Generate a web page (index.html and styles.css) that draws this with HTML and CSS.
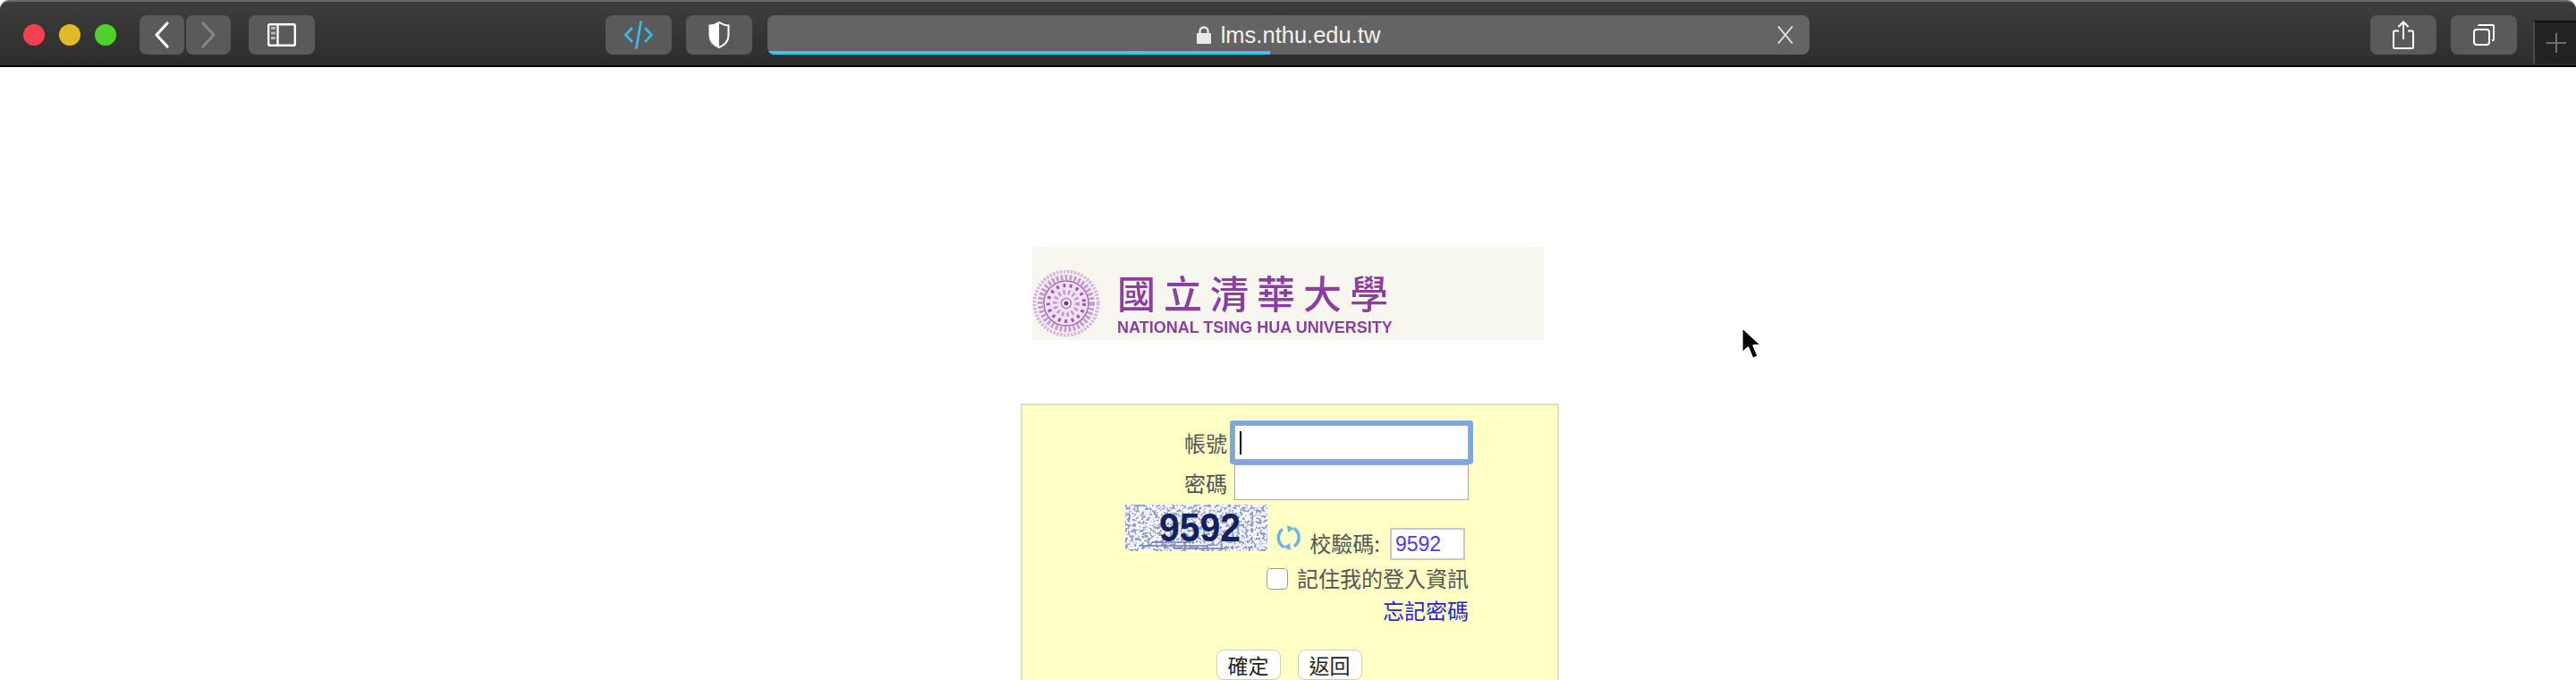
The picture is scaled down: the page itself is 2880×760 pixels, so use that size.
FILE: index.html
```html
<!DOCTYPE html>
<html lang="zh-Hant">
<head>
  <meta charset="UTF-8" />
  <title>lms.nthu.edu.tw</title>
  <link rel="stylesheet" href="styles.css">
</head>
<body>
  <header class="toolbar">
    <div class="lights">
      <span class="light red"></span>
      <span class="light yellow"></span>
      <span class="light green"></span>
    </div>
    <div class="nav">
      <button class="tool tool-nav" type="button">
        <svg width="24" height="32" viewBox="0 0 24 32"><path d="M18 3 L6 16 L18 29" fill="none" stroke="#fff" stroke-width="3.2" stroke-linecap="round" stroke-linejoin="round"/></svg>
      </button>
      <button class="tool tool-nav" type="button">
        <svg width="24" height="32" viewBox="0 0 24 32"><path d="M6 3 L18 16 L6 29" fill="none" stroke="#858585" stroke-width="3.2" stroke-linecap="round" stroke-linejoin="round"/></svg>
      </button>
    </div>
    <button class="tool tool-wide sidebar-btn" type="button">
      <svg width="32" height="26" viewBox="0 0 32 26">
        <rect x="1.2" y="1.2" width="29.6" height="23.6" rx="1.5" fill="none" stroke="#fff" stroke-width="2.4"/>
        <path d="M11.5 1 V25" stroke="#fff" stroke-width="2.4"/>
        <path d="M4 5.5 H9 M4 11 H9 M4 16.5 H9" stroke="#b8b8b8" stroke-width="3"/>
      </svg>
    </button>
    <button class="tool tool-wide code-btn" type="button">
      <svg width="34" height="32" viewBox="0 0 34 32">
        <path d="M10 8 L2.5 16 L10 24 M24 8 L31.5 16 L24 24" fill="none" stroke="#3fb6e8" stroke-width="2.8"/>
        <path d="M19.5 1.5 L14.5 30.5" stroke="#3fb6e8" stroke-width="2.8" stroke-linecap="round"/>
      </svg>
    </button>
    <button class="tool tool-wide shield-btn" type="button">
      <svg width="24" height="30" viewBox="0 0 24 30">
        <path d="M12 1 C8 3.5 5 4.5 1.5 4.5 V15 C1.5 22 6 26.5 12 29 C18 26.5 22.5 22 22.5 15 V4.5 C19 4.5 16 3.5 12 1 Z" fill="none" stroke="#fff" stroke-width="2"/>
        <path d="M12 1 C8 3.5 5 4.5 1.5 4.5 V15 C1.5 22 6 26.5 12 29 Z" fill="#fff"/>
      </svg>
    </button>
    <div class="address">
      <div class="address-text">
        <svg class="lock" width="16" height="20" viewBox="0 0 16 20">
          <path d="M3.5 9 V6 C3.5 3.2 5.5 1.5 8 1.5 C10.5 1.5 12.5 3.2 12.5 6 V9" fill="none" stroke="#e8e8e8" stroke-width="2.4"/>
          <rect x="0" y="8" width="16" height="12" rx="1" fill="#e8e8e8"/>
        </svg>
        <span>lms.nthu.edu.tw</span>
      </div>
      <svg class="stop" width="18" height="20" viewBox="0 0 18 20"><path d="M1 0.5 L17 19.5 M17 0.5 L1 19.5" stroke="#e6e6e6" stroke-width="1.8"/></svg>
      <div class="progress"></div>
    </div>
    <button class="tool tool-wide share-btn" type="button">
      <svg width="24" height="32" viewBox="0 0 24 32">
        <path d="M7 11.5 H2.5 C1.5 11.5 1 12 1 13 V29.5 C1 30.5 1.5 31 2.5 31 H21.5 C22.5 31 23 30.5 23 29.5 V13 C23 12 22.5 11.5 21.5 11.5 H17" fill="none" stroke="#fff" stroke-width="2"/>
        <path d="M12 2 V21 M6.5 7 L12 1.5 L17.5 7" fill="none" stroke="#fff" stroke-width="2"/>
      </svg>
    </button>
    <button class="tool tool-wide tabs-btn" type="button">
      <svg width="24" height="24" viewBox="0 0 24 24">
        <rect x="1" y="6" width="17" height="17" rx="3" fill="none" stroke="#fff" stroke-width="2"/>
        <path d="M6 2 C6 1.3 6.5 1 7 1 H22 C22.6 1 23 1.4 23 2 V17 C23 17.5 22.6 18 22 18 H21" fill="none" stroke="#fff" stroke-width="2"/>
      </svg>
    </button>
    <div class="newtab">
      <svg width="22" height="22" viewBox="0 0 22 22"><path d="M11 0 V22 M0 11 H22" stroke="#6e6e6e" stroke-width="2"/></svg>
    </div>
  </header>

  <main class="page">
    <div class="logo">
      <svg class="seal" width="76" height="76" viewBox="0 0 76 76">
        <circle cx="38" cy="38" r="35.5" fill="none" stroke="#d8b4de" stroke-width="4" stroke-dasharray="2.5 1.5"/>
        <circle cx="38" cy="38" r="29" fill="none" stroke="#c89ad2" stroke-width="6" stroke-dasharray="3 2"/>
        <circle cx="38" cy="38" r="25" fill="#f0e2f0" stroke="#a566b6" stroke-width="1.5"/>
        <circle cx="38" cy="38" r="20" fill="none" stroke="#9d58b0" stroke-width="4" stroke-dasharray="3 4.5"/>
        <circle cx="38" cy="38" r="12.5" fill="none" stroke="#c598d0" stroke-width="5" stroke-dasharray="2.5 3"/>
        <circle cx="38" cy="38" r="5.5" fill="#fff" stroke="#b27cc2" stroke-width="1.5"/>
        <circle cx="38" cy="38" r="2.5" fill="#7e2f95"/>
      </svg>
      <div class="logo-text">
        <div class="logo-zh">國立清華大學</div>
        <div class="logo-en">NATIONAL TSING HUA UNIVERSITY</div>
      </div>
    </div>

    <form class="login">
      <div class="row">
        <label class="lbl">帳號</label>
        <div class="field focused"><span class="caret"></span></div>
      </div>
      <div class="row row-pass">
        <label class="lbl">密碼</label>
        <div class="field"></div>
      </div>
      <div class="row row-captcha">
        <svg class="captcha" width="159" height="52" viewBox="0 0 159 52">
          <defs>
            <filter id="noise" x="0" y="0" width="100%" height="100%">
              <feTurbulence type="fractalNoise" baseFrequency="0.32" numOctaves="2" seed="11"/>
              <feColorMatrix type="matrix" values="0 0 0 0 0.3  0 0 0 0 0.34  0 0 0 0 0.6  7 7 0 0 -6.9"/>
            </filter>
          </defs>
          <rect width="159" height="52" fill="#f6f8ff"/>
          <rect width="159" height="52" filter="url(#noise)"/>
          <path d="M18 46 H92 M30 42 H72 M55 49 H112" stroke="#6d7db4" stroke-width="1.5"/>
          <text class="captcha-text" x="38" y="41" textLength="91" lengthAdjust="spacingAndGlyphs">9592</text>
        </svg>
        <svg class="refresh" width="30" height="30" viewBox="0 0 30 30">
          <path d="M8 5.5 A12 12 0 0 0 9.5 25.5" fill="none" stroke="#6db3e4" stroke-width="3.5"/>
          <path d="M21 24.5 A12 12 0 0 0 20.5 4.5" fill="none" stroke="#6db3e4" stroke-width="3.5"/>
          <path d="M13 1 L21 4.5 L14 9 Z M17 29 L9 25.5 L16 21 Z" fill="#6db3e4"/>
        </svg>
        <label class="lbl lbl-code">校驗碼:</label>
        <div class="code-field">9592</div>
      </div>
      <div class="row row-remember">
        <span class="check"></span>
        <label class="lbl">記住我的登入資訊</label>
      </div>
      <div class="row row-forgot">
        <a class="forgot" href="#">忘記密碼</a>
      </div>
      <div class="actions">
        <button class="btn" type="button">確定</button>
        <button class="btn" type="button">返回</button>
      </div>
    </form>
  </main>

  <svg class="cursor" width="30" height="41" viewBox="0 0 26 36">
    <path d="M2 1.5 V27 L8 21.5 L12.5 32.5 L18 30 L13.5 19.5 H21.5 Z" fill="#000" stroke="#fff" stroke-width="2" stroke-linejoin="round"/>
  </svg>
</body>
</html>
```

FILE: styles.css
```css
html, body {
  margin: 0;
  height: 760px;
  overflow: hidden;
  background: #fff;
}

body {
  position: relative;
  font-family: "Liberation Sans", "Noto Sans CJK TC", sans-serif;
}

.toolbar {
  display: flex;
  align-items: flex-start;
  height: 75px;
  box-sizing: border-box;
  padding-top: 15px;
  background: linear-gradient(#3d3d3d, #2d2d2d);
  border-top: 2px solid #6a6a6a;
  border-bottom: 2px solid #0c0c0c;
  border-radius: 10px 10px 0 0;
}

.tool {
  display: flex;
  align-items: center;
  justify-content: center;
  flex: none;
  height: 44px;
  padding: 0;
  border: 0;
  border-radius: 8px;
  background: #5a5a5a;
}

.tool-nav { width: 50px; }
.tool-wide { width: 74px; }

.lights {
  display: flex;
  gap: 16px;
  margin: 10px 0 0 26px;
}

.light {
  width: 24px;
  height: 24px;
  border-radius: 50%;
}

.red { background: #f2424f; }
.yellow { background: #e0bb27; }
.green { background: #51d12e; }

.nav {
  display: flex;
  gap: 2px;
  margin-left: 26px;
}

.sidebar-btn { margin-left: 20px; }
.code-btn { margin-left: 325px; }
.shield-btn { margin-left: 16px; }
.share-btn { margin-left: 627px; }
.tabs-btn { margin-left: 16px; }

.address {
  position: relative;
  display: flex;
  align-items: center;
  justify-content: center;
  flex: none;
  width: 1165px;
  height: 44px;
  margin-left: 17px;
  border-radius: 8px;
  background: #646464;
  overflow: hidden;
}

.address-text {
  display: flex;
  align-items: center;
  gap: 11px;
  color: #f2f2f2;
  font-size: 25.5px;
}

.stop {
  position: absolute;
  right: 18px;
  top: 12px;
}

.progress {
  position: absolute;
  left: 0;
  bottom: 0;
  width: 562px;
  height: 4px;
  background: #3fc2f6;
}

.newtab {
  display: flex;
  align-items: center;
  justify-content: center;
  flex: none;
  width: 49px;
  height: 48px;
  margin: 6px 0 0 18px;
  box-sizing: border-box;
  border-top: 2px solid #111;
  border-left: 2px solid #4a4a4a;
  background: #232323;
}

/* page */
.page {
  display: flex;
  flex-direction: column;
  align-items: center;
  padding-top: 201px;
}

.logo {
  display: flex;
  width: 572px;
  height: 104px;
  box-sizing: border-box;
  padding-top: 25px;
  gap: 19px;
  background: #f7f7ef;
}

.seal { filter: blur(0.5px); }

.logo-text {
  color: #8c3fa0;
  filter: blur(0.5px);
}

.logo-zh {
  font-family: "Noto Sans CJK TC", sans-serif;
  font-size: 43px;
  font-weight: 500;
  line-height: 50px;
  letter-spacing: 9px;
}

.logo-en {
  margin-top: 5px;
  font-size: 18px;
  font-weight: bold;
  line-height: 20px;
  white-space: nowrap;
}

.login {
  display: flex;
  flex-direction: column;
  flex: none;
  width: 602px;
  height: 400px;
  box-sizing: border-box;
  margin: 71px 0 0 4px;
  padding: 22px 99px 0 0;
  border: 2px solid #e0e0c8;
  background: #ffffc6;
  color: #555;
  font-family: "Noto Sans CJK TC", sans-serif;
  font-size: 24px;
}

.row {
  display: flex;
  justify-content: flex-end;
  align-items: center;
}

.lbl {
  line-height: 30px;
  white-space: nowrap;
}

.field {
  position: relative;
  display: flex;
  align-items: center;
  width: 262px;
  height: 40px;
  margin-left: 8px;
  box-sizing: border-box;
  border: 1px solid #aaa;
  background: #fff;
}

.focused {
  z-index: 1;
  height: 39px;
  border-radius: 1px;
  box-shadow: 0 0 0 5px #7ca8da;
}

.caret {
  width: 2px;
  height: 26px;
  margin-left: 5px;
  background: #000;
}

.row-pass .lbl { padding-top: 2px; }
.row-pass { margin-top: 5px; }

.row-captcha {
  align-items: flex-start;
  margin-top: 5px;
}

.captcha {
  flex: none;
}

.captcha-text {
  font-family: "Liberation Sans", sans-serif;
  font-size: 45px;
  font-weight: bold;
  fill: #14215e;
}

.refresh { margin: 22px 0 0 9px; }

.lbl-code { margin: 28px 0 0 8px; }

.code-field {
  width: 84px;
  height: 36px;
  margin: 26px 4px 0 11px;
  padding-left: 4px;
  box-sizing: border-box;
  border: 2px solid #c8c8c8;
  background: #fff;
  color: #4b3cf0;
  font-family: "Liberation Sans", sans-serif;
  font-size: 23px;
  line-height: 32px;
}

.row-remember { margin-top: 5px; }

.check {
  width: 24px;
  height: 24px;
  margin: 2px 10px 0 0;
  box-sizing: border-box;
  border: 1px solid #999;
  border-radius: 5px;
  background: #fff;
}

.row-forgot { margin-top: 6px; }

.forgot {
  color: #2a24e0;
  line-height: 30px;
  text-decoration: none;
}

.actions {
  display: flex;
  justify-content: center;
  gap: 19px;
  margin-top: 29px;
  padding-left: 97px;
}

.btn {
  width: 72px;
  height: 34px;
  padding: 0;
  border: 1.5px solid #d0d0b0;
  border-radius: 8px;
  background: #fff;
  color: #222;
  font-family: "Noto Sans CJK TC", sans-serif;
  font-size: 23px;
  line-height: 30px;
}

.cursor {
  position: absolute;
  left: 1945px;
  top: 364px;
}
```
